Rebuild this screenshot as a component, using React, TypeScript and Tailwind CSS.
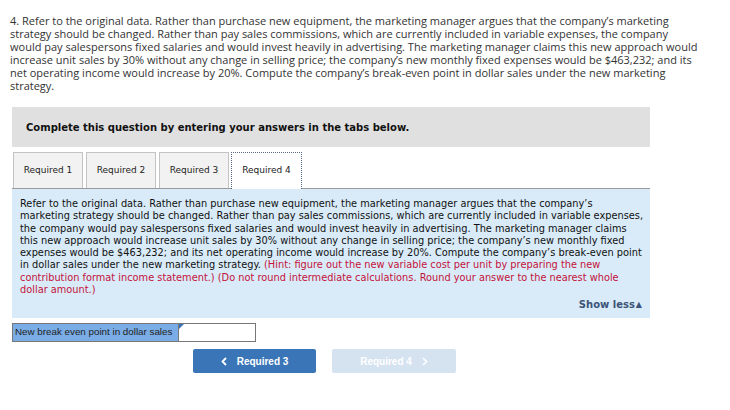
import React from "react";

export default function App() {
  const verdana = { fontFamily: '"DejaVu Sans", Verdana, sans-serif' };
  return (
    <div className="w-[730px] h-[410px] bg-white relative overflow-hidden">
      <div className="pt-[14px] pl-[10px] text-[11px] leading-[13px] text-[#333] whitespace-nowrap" style={{ fontFamily: '"Open Sans", Lato, sans-serif' }}>
        4. Refer to the original data. Rather than purchase new equipment, the marketing manager argues that the company’s marketing<br />
        strategy should be changed. Rather than pay sales commissions, which are currently included in variable expenses, the company<br />
        would pay salespersons fixed salaries and would invest heavily in advertising. The marketing manager claims this new approach would<br />
        increase unit sales by 30% without any change in selling price; the company’s new monthly fixed expenses would be $463,232; and its<br />
        net operating income would increase by 20%. Compute the company’s break-even point in dollar sales under the new marketing<br />
        strategy.
      </div>

      <div className="ml-[12px] mt-[15px] w-[638px] h-[40px] bg-[#e0e0e0] flex items-center pl-[14px]">
        <span className="text-[10px] font-bold text-[#111]" style={verdana}>Complete this question by entering your answers in the tabs below.</span>
      </div>

      <div className="ml-[12px] mt-[5px] w-[638px] flex items-end gap-[2px] border-b border-[#999] h-[37px]">
        {["Required 1", "Required 2", "Required 3"].map((t) => (
          <div key={t} className="ml-[1px] w-[70px] h-[36px] bg-[#f2f2f2] border border-b-0 border-[#c4c4c4] flex items-center justify-center text-[9px] text-[#222]" style={verdana}>
            {t}
          </div>
        ))}
        <div className="w-[71px] h-[37px] -mb-px bg-white border border-dotted border-b-0 border-[#556a8a] flex items-center justify-center text-[9px] text-[#222]" style={verdana}>
          Required 4
        </div>
      </div>

      <div className="ml-[12px] w-[638px] h-[129px] bg-[#d9ebf8] pt-[9px] pl-[8px] relative">
        <div className="text-[9.8px] leading-[12.3px] text-[#111] whitespace-nowrap" style={verdana}>
          Refer to the original data. Rather than purchase new equipment, the marketing manager argues that the company’s<br />
          marketing strategy should be changed. Rather than pay sales commissions, which are currently included in variable expenses,<br />
          the company would pay salespersons fixed salaries and would invest heavily in advertising. The marketing manager claims<br />
          this new approach would increase unit sales by 30% without any change in selling price; the company’s new monthly fixed<br />
          expenses would be $463,232; and its net operating income would increase by 20%. Compute the company’s break-even point<br />
          in dollar sales under the new marketing strategy. <span className="text-[#c4123a]">(Hint: figure out the new variable cost per unit by preparing the new</span><br />
          <span className="text-[#c4123a]">contribution format income statement.) (Do not round intermediate calculations. Round your answer to the nearest whole</span><br />
          <span className="text-[#c4123a]">dollar amount.)</span>
        </div>
        <div className="absolute right-[8px] bottom-[6px] text-[10px] font-bold text-[#3b5478] flex items-center gap-[1px]" style={verdana}>
          Show less<span className="text-[8px]">▲</span>
        </div>
      </div>

      <div className="ml-[12px] mt-[5px] flex h-[19px]">
        <div className="w-[167px] h-[19px] bg-[#7aade6] border border-[#777] flex items-center pl-[2px] text-[9.8px] text-[#222] whitespace-nowrap" style={{ fontFamily: '"Liberation Sans", Arial, sans-serif' }}>
          New break even point in dollar sales
        </div>
        <div className="w-[77px] h-[19px] bg-white border border-l-0 border-[#777] relative">
          <div className="absolute left-0 top-0 w-0 h-0 border-t-[5px] border-t-[#3a75b8] border-r-[5px] border-r-transparent" />
        </div>
      </div>

      <div className="mt-[7px] flex pl-[193px] gap-[16px]">
        <div className="w-[123px] h-[24px] bg-[#3a75b8] rounded-[2px] flex items-center justify-center gap-[10px] text-white text-[10px] font-bold" style={{ fontFamily: '"Liberation Sans", Arial, sans-serif' }}>
          <svg width="6" height="9" viewBox="0 0 6 9"><path d="M5 1 L1.5 4.5 L5 8" stroke="white" strokeWidth="1.8" fill="none" /></svg>
          <span>Required 3</span>
        </div>
        <div className="w-[124px] h-[24px] bg-[#d5e2f0] rounded-[2px] flex items-center justify-center gap-[10px] text-white text-[10px] font-bold" style={{ fontFamily: '"Liberation Sans", Arial, sans-serif' }}>
          <span>Required 4</span>
          <svg width="6" height="9" viewBox="0 0 6 9"><path d="M1 1 L4.5 4.5 L1 8" stroke="white" strokeWidth="1.5" fill="none" /></svg>
        </div>
      </div>
    </div>
  );
}
